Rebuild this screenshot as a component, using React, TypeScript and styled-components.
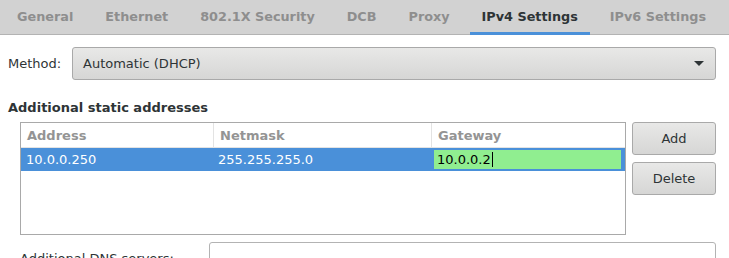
import React from 'react';
import styled, { createGlobalStyle } from 'styled-components';

const GlobalStyle = createGlobalStyle`
  html, body {
    margin: 0;
    padding: 0;
    background: #ffffff;
    overflow: hidden;
  }
  body {
    font-family: 'DejaVu Sans', 'Liberation Sans', sans-serif;
    font-size: 13px;
    color: #2e3436;
  }
`;

const Window = styled.div`
  width: 729px;
  height: 258px;
  overflow: hidden;
`;

const TabBar = styled.nav`
  display: flex;
  height: 35px;
  padding-left: 1px;
  background: #d2d2d2;
  box-shadow: inset 0 -1px 0 #b3b3b3;
`;

const Tab = styled.div<{ $active?: boolean }>`
  display: flex;
  align-items: center;
  padding: 0 12px 2px;
  margin: 0 4px;
  font-size: 12.8px;
  font-weight: bold;
  color: ${({ $active }) => ($active ? '#2e3436' : '#8e8e8e')};
  box-shadow: ${({ $active }) => ($active ? 'inset 0 -3px 0 #4a90d9' : 'none')};
  white-space: nowrap;
`;

const Content = styled.main`
  padding: 12px 13px 0 8px;
`;

const MethodRow = styled.div`
  display: flex;
  align-items: center;
`;

const Label = styled.span<{ $width?: number }>`
  flex: 0 0 ${({ $width }) => $width ?? 64}px;
  white-space: nowrap;
`;

const Combo = styled.div`
  flex: 1;
  height: 33px;
  box-sizing: border-box;
  display: flex;
  align-items: center;
  justify-content: space-between;
  padding: 0 11px 0 10px;
  border: 1px solid #a9a9a9;
  border-radius: 3px;
  background: linear-gradient(#e8e8e7, #d6d6d5);
`;

const Arrow = styled.span`
  width: 0;
  height: 0;
  border-left: 5px solid transparent;
  border-right: 5px solid transparent;
  border-top: 5px solid #2e3436;
`;

const SectionTitle = styled.h3`
  margin: 20px 0 6px;
  font-size: 13px;
  font-weight: bold;
  line-height: 16px;
`;

const AddressArea = styled.div`
  display: flex;
  gap: 6px;
  margin-left: 12px;
`;

const AddressTable = styled.div`
  flex: 1;
  height: 113px;
  box-sizing: border-box;
  border: 1px solid #a9a9a9;
  background: #ffffff;
`;

const TableRow = styled.div<{ $header?: boolean; $selected?: boolean }>`
  display: grid;
  grid-template-columns: 192px 218px 1fr;
  height: ${({ $header }) => ($header ? 25 : 23)}px;
  box-sizing: border-box;
  border-bottom: ${({ $header }) => ($header ? '1px solid #e3e3e3' : 'none')};
  background: ${({ $selected }) => ($selected ? '#4a90d9' : 'transparent')};
  color: ${({ $selected }) => ($selected ? '#ffffff' : 'inherit')};
`;

const HeaderCell = styled.div<{ $divider?: boolean }>`
  display: flex;
  align-items: center;
  padding-left: 6px;
  font-weight: bold;
  color: #949494;
  border-left: ${({ $divider }) => ($divider ? '1px solid #e3e3e3' : 'none')};
`;

const Cell = styled.div`
  display: flex;
  align-items: center;
  padding-left: 5px;
`;

const EditCell = styled.div`
  display: flex;
  align-items: center;
  padding: 0 4px 0 3px;
`;

const GreenEntry = styled.div`
  flex: 1;
  height: 19px;
  display: flex;
  align-items: center;
  padding-left: 3px;
  background: #90ee90;
  color: #000000;
`;

const Caret = styled.span`
  display: inline-block;
  width: 1px;
  height: 15px;
  margin-left: 1px;
  background: #000000;
`;

const ButtonColumn = styled.div`
  display: flex;
  flex-direction: column;
  gap: 7px;
  width: 84px;
`;

const Button = styled.button`
  height: 33px;
  box-sizing: border-box;
  border: 1px solid #a9a9a9;
  border-radius: 3px;
  background: linear-gradient(#e8e8e7, #d6d6d5);
  font-family: inherit;
  font-size: 13px;
  color: #2e3436;
  padding: 0;
`;

const DnsRow = styled.div`
  display: flex;
  align-items: center;
  margin: 7px 0 0 12px;
`;

const DnsEntry = styled.div`
  flex: 1;
  height: 33px;
  box-sizing: border-box;
  border: 1px solid #b3b3b3;
  border-radius: 3px;
  background: #ffffff;
`;

const tabs = ['General', 'Ethernet', '802.1X Security', 'DCB', 'Proxy', 'IPv4 Settings', 'IPv6 Settings'];

const App = (): JSX.Element => {
  return (
    <Window>
      <GlobalStyle />
      <TabBar>
        {tabs.map((t) => (
          <Tab key={t} $active={t === 'IPv4 Settings'}>
            {t}
          </Tab>
        ))}
      </TabBar>
      <Content>
        <MethodRow>
          <Label>Method:</Label>
          <Combo>
            <span>Automatic (DHCP)</span>
            <Arrow />
          </Combo>
        </MethodRow>
        <SectionTitle>Additional static addresses</SectionTitle>
        <AddressArea>
          <AddressTable>
            <TableRow $header>
              <HeaderCell>Address</HeaderCell>
              <HeaderCell $divider>Netmask</HeaderCell>
              <HeaderCell $divider>Gateway</HeaderCell>
            </TableRow>
            <TableRow $selected>
              <Cell>10.0.0.250</Cell>
              <Cell>255.255.255.0</Cell>
              <EditCell>
                <GreenEntry>
                  10.0.0.2
                  <Caret />
                </GreenEntry>
              </EditCell>
            </TableRow>
          </AddressTable>
          <ButtonColumn>
            <Button>Add</Button>
            <Button>Delete</Button>
          </ButtonColumn>
        </AddressArea>
        <DnsRow>
          <Label $width={189}>Additional DNS servers:</Label>
          <DnsEntry />
        </DnsRow>
      </Content>
    </Window>
  );
};

export default App;
